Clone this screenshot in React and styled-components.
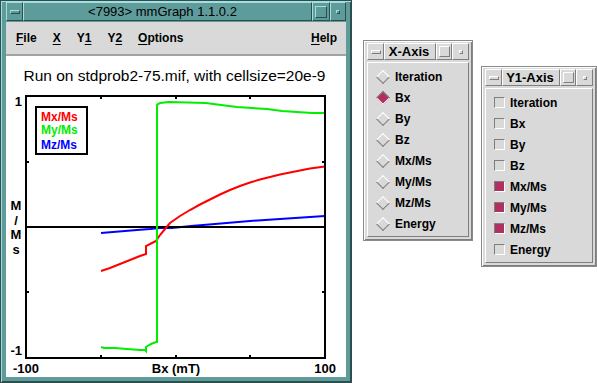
import React from 'react';
import styled, { createGlobalStyle, css } from 'styled-components';

const GlobalStyle = createGlobalStyle`
  html, body {
    margin: 0;
    padding: 0;
    background: #ffffff;
    font-family: "Liberation Sans", Arial, sans-serif;
  }
`;

const LIGHT = '#ffffff';
const DARK = '#7e7e7e';
const GRAY = '#d9d9d9';
const TEAL = '#5e9c9c';
const TEAL_LIGHT = '#a6dede';
const TEAL_DARK = '#2e4e4e';
const MAROON = '#b03060';

const raised = css`
  border: 1px solid;
  border-color: ${LIGHT} ${DARK} ${DARK} ${LIGHT};
`;

const sunken = css`
  border: 1px solid;
  border-color: ${DARK} ${LIGHT} ${LIGHT} ${DARK};
`;

const Desktop = styled.div`
  position: relative;
  width: 597px;
  height: 383px;
  overflow: hidden;
  background: #ffffff;
`;

// main mmGraph window
const MainWindow = styled.div`
  position: absolute;
  left: 0;
  top: 0;
  width: 352px;
  height: 383px;
  box-sizing: border-box;
  background: ${TEAL};
  border: 1px solid ${TEAL_DARK};
  box-shadow: inset 1px 1px 0 ${TEAL_LIGHT}, inset -1px -1px 0 ${TEAL_DARK};
  padding: 1px 5px 5px 5px;
  display: flex;
  flex-direction: column;
`;

const TealBar = styled.div`
  height: 19px;
  display: flex;
  margin-bottom: 1px;
`;

const TealButton = styled.div`
  width: ${p => p.$w || 16}px;
  box-sizing: border-box;
  border: 1px solid;
  border-color: ${TEAL_LIGHT} ${TEAL_DARK} ${TEAL_DARK} ${TEAL_LIGHT};
  display: flex;
  align-items: center;
  justify-content: center;
`;

const TealTitle = styled.div`
  flex: 1;
  box-sizing: border-box;
  border: 1px solid;
  border-color: ${TEAL_LIGHT} ${TEAL_DARK} ${TEAL_DARK} ${TEAL_LIGHT};
  display: flex;
  align-items: center;
  justify-content: center;
  font-size: 13px;
  color: #000;
  padding-right: 10px;
`;

const Glyph = styled.div`
  box-sizing: border-box;
  width: ${p => p.$w}px;
  height: ${p => p.$h}px;
  border: 1px solid;
  border-color: ${p => p.$light} ${p => p.$dark} ${p => p.$dark} ${p => p.$light};
`;

const Client = styled.div`
  flex: 1;
  background: #ffffff;
  display: flex;
  flex-direction: column;
`;

const MenuBar = styled.div`
  height: 32px;
  background: ${GRAY};
  border-bottom: 2px solid #a3a3a3;
  display: flex;
  align-items: center;
  gap: 16px;
  padding: 0 9px 0 10px;
  font-size: 12px;
  font-weight: bold;
`;

const MenuItem = styled.span`
  margin-left: ${p => (p.$right ? 'auto' : '0')};
  u {
    text-decoration: underline;
    text-underline-offset: 2px;
  }
`;

const PlotTitle = styled.div`
  font-size: 15.5px;
  text-align: center;
  margin-top: 12px;
  line-height: 16px;
  height: 20px;
  padding-right: 3px;
`;

const PlotSvg = styled.svg`
  display: block;
  width: 340px;
  height: 289px;
  font-family: "Liberation Sans", Arial, sans-serif;
  font-weight: bold;
`;

// small axis-select windows
const AxisWindow = styled.div`
  position: absolute;
  left: ${p => p.$left}px;
  top: ${p => p.$top}px;
  width: ${p => p.$width}px;
  height: 201px;
  box-sizing: border-box;
  background: ${GRAY};
  border: 1px solid #8a8a8a;
  box-shadow: inset 1px 1px 0 ${LIGHT}, inset -1px -1px 0 ${DARK};
  padding: 2px 3px 3px 3px;
  display: flex;
  flex-direction: column;
`;

const GrayBar = styled.div`
  height: 17px;
  display: flex;
  margin-bottom: 2px;
`;

const GrayButton = styled.div`
  ${raised};
  width: ${p => p.$w || 15}px;
  box-sizing: border-box;
  display: flex;
  align-items: center;
  justify-content: center;
`;

const GrayTitle = styled.div`
  ${raised};
  flex: 1;
  box-sizing: border-box;
  display: flex;
  align-items: center;
  justify-content: center;
  font-size: 13px;
  font-weight: bold;
  padding-right: 2px;
`;

const ItemPanel = styled.div`
  ${raised};
  flex: 1;
  padding: 3px 0 0 8px;
  display: flex;
  flex-direction: column;
`;

const ItemRow = styled.div`
  height: 21px;
  display: flex;
  align-items: center;
  gap: ${p => (p.$check ? 5 : 7)}px;
  font-size: 12px;
  font-weight: bold;
`;

const Diamond = styled.span`
  display: inline-block;
  width: 8px;
  height: 8px;
  margin-left: 2px;
  transform: rotate(45deg);
  border: 1px solid;
  border-color: ${LIGHT} ${DARK} ${DARK} ${LIGHT};
  background: ${p => (p.$on ? MAROON : GRAY)};
  ${p => p.$on && css`border-color: ${DARK} ${LIGHT} ${LIGHT} ${DARK};`}
`;

const CheckBox = styled.span`
  ${sunken};
  display: inline-block;
  width: 9px;
  height: 9px;
  background: ${p => (p.$on ? MAROON : GRAY)};
`;

const axisItems = ['Iteration', 'Bx', 'By', 'Bz', 'Mx/Ms', 'My/Ms', 'Mz/Ms', 'Energy'];

const greenPts = '101,347 104,348 115,348 127,349 140,350 145,350 146,351 146,347 149,345 151,344 156,342 157,342 157,105 158,104 160,103 169,102 206,103 221,105 237,107 252,108 267,109 282,111 297,112 312,113 325,113';
const redPts = '101,271 110,268 120,264 130,260 140,256 146,254 146,246 152,243 156,241 158,238 160,235 165,229 170,223 180,216 190,210 200,204.5 210,199.5 220,194.5 230,190 240,186 250,182.5 260,179.5 270,177 280,174.5 290,172.5 300,170.5 310,168.5 325,166.5';
const bluePts = '101,233 113,232 125,231 137,230 150,229 160,228 172,228 191,226 215,224 250,221 280,219 310,217 325,216';

const tickX = [101, 176, 250];
const tickY = [162, 292];

const Plot = () => (
  <PlotSvg viewBox="6 88 340 289">
    <polyline points={bluePts} fill="none" stroke="#0000ff" strokeWidth="2" />
    <line x1="26" y1="227" x2="325" y2="227" stroke="#000" strokeWidth="2" />
    <polyline points={redPts} fill="none" stroke="#ff0000" strokeWidth="2" />
    <polyline points={greenPts} fill="none" stroke="#00ee00" strokeWidth="2" />
    <rect x="26" y="96" width="299" height="262" fill="none" stroke="#000" strokeWidth="2" />
    {tickX.map(x => (
      <g key={x}>
        <line x1={x} y1="96" x2={x} y2="99" stroke="#000" strokeWidth="2" />
        <line x1={x} y1="355" x2={x} y2="358" stroke="#000" strokeWidth="2" />
      </g>
    ))}
    {tickY.map(y => (
      <g key={y}>
        <line x1="26" y1={y} x2="29" y2={y} stroke="#000" strokeWidth="2" />
        <line x1="322" y1={y} x2="325" y2={y} stroke="#000" strokeWidth="2" />
      </g>
    ))}
    <rect x="36" y="107" width="51" height="47" fill="#fff" stroke="#000" strokeWidth="2" />
    <text x="41" y="121" fontSize="12" fill="#ff0000">Mx/Ms</text>
    <text x="41" y="134" fontSize="12" fill="#00ee00">My/Ms</text>
    <text x="41" y="149" fontSize="12" fill="#0000ff">Mz/Ms</text>
    <text x="22" y="106" fontSize="13" textAnchor="end">1</text>
    <text x="22" y="355" fontSize="13" textAnchor="end">-1</text>
    <text x="13" y="373" fontSize="13">-100</text>
    <text x="176" y="373" fontSize="13" textAnchor="middle">Bx (mT)</text>
    <text x="336" y="373" fontSize="13" textAnchor="end">100</text>
    {['M', '/', 'M', 's'].map((c, i) => (
      <text key={i} x="16" y={210 + i * 14.5} fontSize="13" textAnchor="middle">{c}</text>
    ))}
  </PlotSvg>
);

const SmallWindow = ({ left, top, width, title, check, selected }) => (
  <AxisWindow $left={left} $top={top} $width={width}>
    <GrayBar>
      <GrayButton $w={17}>
        <Glyph $w={10} $h={4} $light={LIGHT} $dark={DARK} />
      </GrayButton>
      <GrayTitle>{title}</GrayTitle>
      <GrayButton $w={16}>
        <Glyph $w={11} $h={11} $light={LIGHT} $dark={DARK} />
      </GrayButton>
      <GrayButton $w={17}>
        <Glyph $w={4} $h={4} $light={LIGHT} $dark={DARK} />
      </GrayButton>
    </GrayBar>
    <ItemPanel>
      {axisItems.map(name => (
        <ItemRow key={name} $check={check}>
          {check
            ? <CheckBox $on={selected.includes(name)} />
            : <Diamond $on={selected.includes(name)} />}
          {name}
        </ItemRow>
      ))}
    </ItemPanel>
  </AxisWindow>
);

const App = () => (
  <>
    <GlobalStyle />
    <Desktop>
      <MainWindow>
        <TealBar>
          <TealButton $w={17}>
            <Glyph $w={10} $h={4} $light={TEAL_LIGHT} $dark={TEAL_DARK} />
          </TealButton>
          <TealTitle>&lt;7993&gt; mmGraph 1.1.0.2</TealTitle>
          <TealButton $w={18}>
            <Glyph $w={12} $h={12} $light={TEAL_LIGHT} $dark={TEAL_DARK} />
          </TealButton>
          <TealButton $w={16}>
            <Glyph $w={4} $h={4} $light={TEAL_LIGHT} $dark={TEAL_DARK} />
          </TealButton>
        </TealBar>
        <Client>
          <MenuBar>
            <MenuItem><u>F</u>ile</MenuItem>
            <MenuItem><u>X</u></MenuItem>
            <MenuItem>Y<u>1</u></MenuItem>
            <MenuItem>Y<u>2</u></MenuItem>
            <MenuItem><u>O</u>ptions</MenuItem>
            <MenuItem $right><u>H</u>elp</MenuItem>
          </MenuBar>
          <PlotTitle>Run on stdprob2-75.mif, with cellsize=20e-9</PlotTitle>
          <Plot />
        </Client>
      </MainWindow>
      <SmallWindow left={363} top={40} width={110} title="X-Axis" selected={['Bx']} />
      <SmallWindow left={481} top={66} width={116} title="Y1-Axis" check selected={['Mx/Ms', 'My/Ms', 'Mz/Ms']} />
    </Desktop>
  </>
);

export default App;
